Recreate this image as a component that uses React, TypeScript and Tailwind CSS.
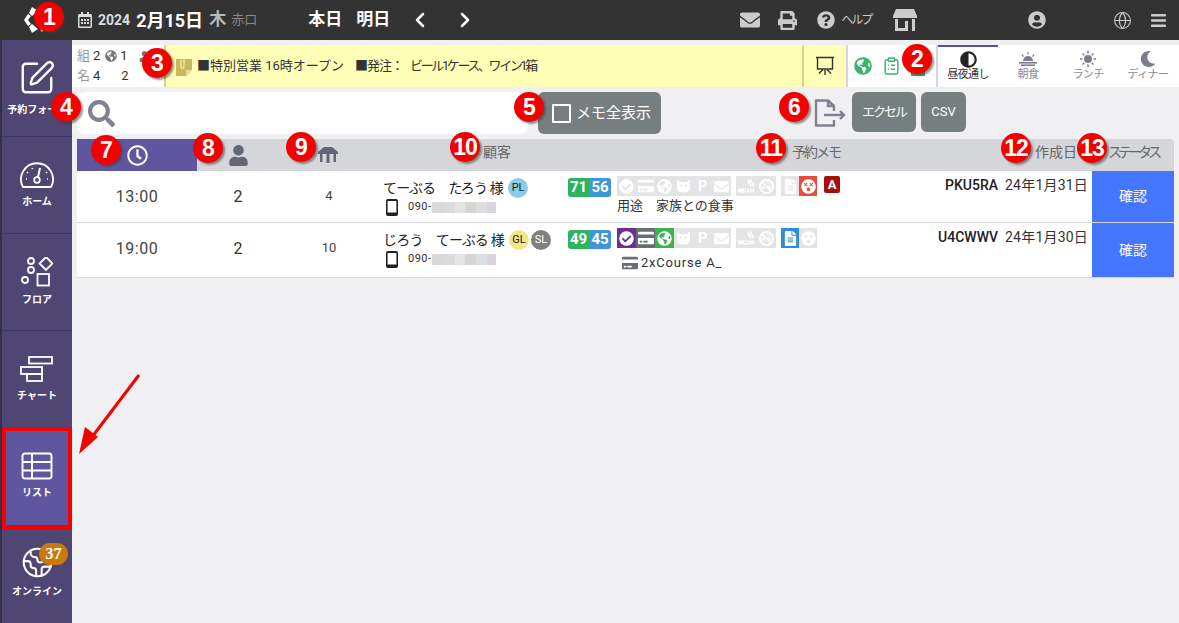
import type { ReactNode } from 'react';
import { ChevronLeft, ChevronRight, ClipboardList, Earth, Globe, SquarePen } from 'lucide-react';
import {
  FaAdjust, FaBars, FaCheckCircle, FaDizzy, FaEnvelope, FaFileAlt, FaGlobeAmericas,
  FaMoon, FaPrint, FaQuestionCircle, FaRegCalendarAlt, FaRegClock, FaSearch, FaSmoking,
  FaSmokingBan, FaUser, FaUserCircle, FaCreditCard,
} from 'react-icons/fa';

const MARKERS = [
  { n: 1, cls: 'left-[34px] top-[2px]' },
  { n: 2, cls: 'left-[902px] top-[44px]' },
  { n: 3, cls: 'left-[142px] top-[48px]' },
  { n: 4, cls: 'left-[51px] top-[92px]' },
  { n: 5, cls: 'left-[514px] top-[92px]' },
  { n: 6, cls: 'left-[779px] top-[92px]' },
  { n: 7, cls: 'left-[91px] top-[135px]' },
  { n: 8, cls: 'left-[193px] top-[133px]' },
  { n: 9, cls: 'left-[286px] top-[132px]' },
  { n: 10, cls: 'left-[450px] top-[132px]' },
  { n: 11, cls: 'left-[756px] top-[133px]' },
  { n: 12, cls: 'left-[1001px] top-[133px]' },
  { n: 13, cls: 'left-[1077px] top-[133px]' },
];

function Marker({ n, cls }: { n: number; cls: string }) {
  return (
    <div className={`absolute ${cls} w-[30px] h-[30px] rounded-full bg-[#f50000] text-white flex items-center justify-center font-['Liberation_Sans',sans-serif] font-bold text-[23px] tracking-[-1px] shadow-[2px_2px_2px_rgba(60,60,60,0.55)] z-20`}>
      {n}
    </div>
  );
}

function Logo() {
  return (
    <svg viewBox="0 0 24 28" className="w-[24px] h-[28px]" fill="#fff">
      <path d="M9 1 L15 5 L9 10 L6 7 Z" />
      <path d="M5 8 L8 10 L5 14 L8 18 L5 20 L1 14 Z" />
      <path d="M6 21 L9 18 L15 23 L9 27 Z" />
      <path d="M17 23 L21 20 L23 22 L19 26 Z" />
    </svg>
  );
}

function GaugeIcon() {
  return (
    <svg viewBox="0 0 34 28" className="w-[34px] h-[28px]" fill="none" stroke="#fff" strokeWidth="1.8">
      <path d="M3 26 A16 16 0 1 1 31 26 Z" strokeLinejoin="round" />
      <circle cx="17" cy="19" r="2.8" />
      <path d="M18 16 L20 7" strokeWidth="2" />
      <path d="M7 11 L8 12 M6 18 L7 18 M27 11 L26 12 M28 18 L27 18 M12 7 L12.5 8" strokeWidth="1.6" />
    </svg>
  );
}

function FloorIcon() {
  return (
    <svg viewBox="0 0 32 30" className="w-[32px] h-[30px]" fill="none" stroke="#fff" strokeWidth="1.8">
      <circle cx="10" cy="4" r="3" />
      <circle cx="10" cy="13" r="3" />
      <circle cx="4" cy="23" r="3" />
      <path d="M25 0 L31.5 6.5 L25 13 L18.5 6.5 Z" />
      <rect x="16.5" y="17" width="11.5" height="11.5" />
    </svg>
  );
}

function ChartIcon() {
  return (
    <svg viewBox="0 0 34 27" className="w-[34px] h-[27px]" fill="none" stroke="#fff" strokeWidth="1.8">
      <rect x="9" y="1" width="23" height="6.5" />
      <rect x="1" y="11" width="21" height="7" />
      <rect x="7" y="18" width="15" height="7" />
    </svg>
  );
}

function ListIcon() {
  return (
    <svg viewBox="0 0 32 28" className="w-[32px] h-[28px]" fill="none" stroke="#fff" strokeWidth="1.9">
      <rect x="1.5" y="1.5" width="29" height="25" rx="2.5" />
      <path d="M1.5 10 H30.5 M1.5 18.5 H30.5 M11 1.5 V26.5" />
    </svg>
  );
}

function CatIcon() {
  return (
    <svg viewBox="0 0 16 14" className="w-[15px] h-[14px]" fill="#fff">
      <path fillRule="evenodd" d="M1 0 L5 3 H11 L15 0 V9 C15 12 12 14 8 14 C4 14 1 12 1 9 Z M4 6.5 A1.2 1.2 0 0 0 6.4 6.5 A1.2 1.2 0 0 0 4 6.5 Z M9.6 6.5 A1.2 1.2 0 0 0 12 6.5 A1.2 1.2 0 0 0 9.6 6.5 Z" />
    </svg>
  );
}

function NavItem({ icon, label, active, badge }: { icon: ReactNode; label: string; active?: boolean; badge?: string }) {
  return (
    <div className={`relative flex flex-col items-center justify-center gap-[6px] text-white ${active ? 'h-[102px] mt-[-1px] pb-[5px] bg-[#6056a0] border-[4px] border-[#f50000]' : badge ? 'h-[96px] pb-[10px]' : 'h-[97px] border-b border-[#3f3862]'}`}>
      {icon}
      <span className="text-[10px] font-bold whitespace-nowrap leading-[14px]">{label}</span>
      {badge && (
        <span className="absolute left-[37px] top-[14px] w-[29px] h-[22px] rounded-full bg-[#c97a08] flex items-center justify-center text-[16px] font-bold font-['Liberation_Serif',serif]">
          {badge}
        </span>
      )}
    </div>
  );
}

function Tile({ on, w, children }: { on?: string; w: string; children: ReactNode }) {
  return (
    <span className={`${w} h-[20px] flex items-center justify-center text-white text-[15px] font-bold ${on ?? 'bg-[#e4e4e6]'}`}>
      {children}
    </span>
  );
}

function Badge({ text, cls }: { text: string; cls: string }) {
  return (
    <span className={`w-[20px] h-[20px] rounded-full flex items-center justify-center text-[11px] ${cls}`}>{text}</span>
  );
}

function Pixelated() {
  return (
    <span className="flex w-[64px] h-[11px]">
      <span className="w-[12px] bg-[#dcd8d8]" />
      <span className="w-[11px] bg-[#d8dcde]" />
      <span className="w-[10px] bg-[#e4e4e4]" />
      <span className="w-[11px] bg-[#d8d6d2]" />
      <span className="w-[11px] bg-[#dcdfe2]" />
      <span className="w-[9px] bg-[#d8d6da]" />
    </span>
  );
}

function PhoneIcon() {
  return (
    <svg viewBox="0 0 12 17" className="w-[12px] h-[17px] ml-[3px] mr-[10px]" fill="#222">
      <path fillRule="evenodd" d="M2 0 H10 A2 2 0 0 1 12 2 V15 A2 2 0 0 1 10 17 H2 A2 2 0 0 1 0 15 V2 A2 2 0 0 1 2 0 Z M1.6 2 V13.5 H10.4 V2 Z" />
    </svg>
  );
}

type RowData = {
  time: string;
  table: string;
  name: string;
  badges: ReactNode;
  scores: [string, string];
  activeFirst: boolean;
  note: ReactNode;
  code: string;
  date: string;
  height: string;
};

const ROWS: RowData[] = [
  {
    time: '13:00',
    table: '4',
    name: 'てーぶる　たろう 様',
    badges: <Badge text="PL" cls="bg-[#8ecbe6] text-[#222]" />,
    scores: ['71', '56'],
    activeFirst: false,
    note: <span className="text-[13px] text-[#333]">用途　家族との食事</span>,
    code: 'PKU5RA',
    date: '24年1月31日',
    height: 'h-[52px]',
  },
  {
    time: '19:00',
    table: '10',
    name: 'じろう　てーぶる 様',
    badges: (
      <>
        <Badge text="GL" cls="bg-[#f5e58a] text-[#222]" />
        <Badge text="SL" cls="bg-[#808080] text-white" />
      </>
    ),
    scores: ['49', '45'],
    activeFirst: true,
    note: (
      <span className="ml-[5px] flex items-center gap-[3px] text-[13px] tracking-[0.8px] text-[#333]">
        <FaCreditCard className="text-[16px] text-[#666e70]" />
        2xCourse A_
      </span>
    ),
    code: 'U4CWWV',
    date: '24年1月30日',
    height: 'h-[55px]',
  },
];

function Row({ r }: { r: RowData }) {
  return (
    <div className={`flex ${r.height} bg-white border-b border-[#d5d5da]`}>
      <div className="w-[120px] pt-[16px] text-center text-[16px] tracking-[0.5px] text-[#444] leading-[20px]">{r.time}</div>
      <div className="w-[82px] pt-[16px] text-center text-[16px] text-[#333] leading-[20px]">2</div>
      <div className="w-[100px] pt-[15px] text-center text-[13px] text-[#444] leading-[20px]">{r.table}</div>
      <div className="w-[189px] pl-[4px] pt-[7px]">
        <div className="flex items-center gap-[5px] h-[20px] text-[14px] tracking-[-0.8px] text-[#222] whitespace-nowrap">
          {r.name}
          <span className="flex gap-[2px] tracking-normal">{r.badges}</span>
        </div>
        <div className="flex items-center h-[18px] text-[11px] text-[#333] tracking-[0.5px]">
          <PhoneIcon />
          090-
          <Pixelated />
        </div>
      </div>
      <div className="w-[369px] pt-[5px] flex gap-[6px]">
        <div className="flex h-[19px] mt-[2px] rounded-[3px] overflow-hidden text-white font-bold text-[15px] leading-[19px] text-center">
          <span className="w-[21px] bg-[#2fb35f]">{r.scores[0]}</span>
          <span className="w-[22px] bg-[#3f97d8]">{r.scores[1]}</span>
        </div>
        <div className="flex-1">
          <div className="flex items-start">
            <div className="flex">
              <Tile w="w-[19px]" on={r.activeFirst ? 'bg-[#6e2f91]' : undefined}><FaCheckCircle /></Tile>
              <Tile w="w-[19px]" on={r.activeFirst ? 'bg-[#666e70]' : undefined}><FaCreditCard className="text-[16px]" /></Tile>
              <Tile w="w-[19px]" on={r.activeFirst ? 'bg-[#38b44d]' : undefined}><FaGlobeAmericas /></Tile>
              <Tile w="w-[19px]"><CatIcon /></Tile>
              <Tile w="w-[19px]">P</Tile>
              <Tile w="w-[19px]"><FaEnvelope /></Tile>
            </div>
            <div className="flex ml-[5px]">
              <Tile w="w-[20px]"><FaSmoking className="text-[16px]" /></Tile>
              <Tile w="w-[20px]"><FaSmokingBan className="text-[15px]" /></Tile>
            </div>
            <div className="flex ml-[5px]">
              <Tile w="w-[18px]" on={r.activeFirst ? 'bg-[#2e8fd8]' : undefined}><FaFileAlt /></Tile>
              <Tile w="w-[18px]" on={r.activeFirst ? undefined : 'bg-[#ea4c3c]'}><FaDizzy /></Tile>
            </div>
            {!r.activeFirst && (
              <span className="ml-[7px] w-[16px] h-[17px] rounded-[2px] bg-[#a80c0c] text-white text-[13px] font-bold flex items-center justify-center">A</span>
            )}
          </div>
          <div className={`flex ${r.activeFirst ? 'mt-[5px]' : 'mt-[0px]'} h-[20px] items-center`}>{r.note}</div>
        </div>
      </div>
      <div className="flex-1 flex justify-end gap-[7px] pr-[4px] pt-[6px] text-[14px] text-[#333] whitespace-nowrap leading-[16px]">
        <span className="font-medium text-[#222]">{r.code}</span>
        <span className="tracking-[0.2px]">{r.date}</span>
      </div>
      <div className="w-[82px] bg-[#4476ff] text-white text-[14px] flex items-center justify-center">確認</div>
    </div>
  );
}

function MealTab({ icon, label, active }: { icon: ReactNode; label: string; active?: boolean }) {
  return (
    <div className={`w-[60px] flex flex-col items-center pt-[3px] text-[11px] leading-[14px] ${active ? 'border-t-2 border-[#5b4fa0] text-[#333]' : 'border-t-2 border-white text-[#8a8a99]'}`}>
      <span className={`h-[18px] flex items-center text-[16px] ${active ? 'text-[#222]' : 'text-[#7c7c8c]'}`}>{icon}</span>
      <span className="whitespace-nowrap tracking-[-0.6px]">{label}</span>
    </div>
  );
}

function SunriseIcon() {
  return (
    <svg viewBox="0 0 18 14" className="w-[18px] h-[14px]" fill="#7c7c8c">
      <path d="M4 9 A5 5 0 0 1 14 9 Z" />
      <rect x="0" y="10" width="18" height="1.6" />
      <rect x="2" y="12.4" width="14" height="1.6" />
      <path d="M8.4 0 H9.6 V2.6 H8.4 Z M2.5 3 L3.5 2.2 L5 4.2 L4 5 Z M15.5 3 L14.5 2.2 L13 4.2 L14 5 Z" />
    </svg>
  );
}

function SunIcon() {
  return (
    <svg viewBox="0 0 16 16" className="w-[16px] h-[16px]" fill="#7c7c8c">
      <circle cx="8" cy="8" r="4" />
      <path d="M7.2 0 H8.8 V2.4 H7.2 Z M7.2 13.6 H8.8 V16 H7.2 Z M0 7.2 H2.4 V8.8 H0 Z M13.6 7.2 H16 V8.8 H13.6 Z M2 3.1 L3.1 2 L4.8 3.7 L3.7 4.8 Z M11.2 12.3 L12.3 11.2 L14 12.9 L12.9 14 Z M12.9 2 L14 3.1 L12.3 4.8 L11.2 3.7 Z M3.7 11.2 L4.8 12.3 L3.1 14 L2 12.9 Z" />
    </svg>
  );
}

export default function App() {
  return (
    <div className="relative w-[1179px] h-[623px] overflow-hidden bg-[#f0f0f3] font-['Roboto','Noto_Sans_CJK_JP',sans-serif]">
      <header className="h-[40px] bg-[#333] flex items-center text-white">
        <div className="ml-[23px] w-[54px]"><Logo /></div>
        <FaRegCalendarAlt className="text-[16px] text-[#ddd]" />
        <span className="ml-[5px] text-[14px] font-bold text-[#ddd]">2024</span>
        <span className="ml-[6px] text-[18px] font-bold">2月15日</span>
        <span className="ml-[6px] text-[17px] font-bold text-[#bbb]">木</span>
        <span className="ml-[5px] text-[13px] text-[#888]">赤口</span>
        <span className="ml-[51px] text-[17px] font-bold">本日</span>
        <span className="ml-[14px] text-[17px] font-bold">明日</span>
        <ChevronLeft className="ml-[18px] w-[24px] h-[24px]" strokeWidth={2.5} />
        <ChevronRight className="ml-[21px] w-[24px] h-[24px]" strokeWidth={2.5} />
        <FaEnvelope className="ml-[263px] text-[20px] text-[#ccc]" />
        <FaPrint className="ml-[18px] text-[19px] text-[#ccc]" />
        <FaQuestionCircle className="ml-[20px] text-[18px] text-[#ccc]" />
        <span className="ml-[6px] text-[12px] tracking-[-2px] text-[#ccc]">ヘルプ</span>
        <svg viewBox="0 0 24 22" className="ml-[22px] w-[24px] h-[22px]" fill="#ccc">
          <path d="M3 0 H21 L24 7 V9 H0 V7 Z" />
          <path d="M2 10 H5 V19 H12 V12 H15 V22 H2 Z" />
          <rect x="19" y="10" width="3" height="12" />
        </svg>
        <FaUserCircle className="ml-[111px] text-[18px] text-[#ccc]" />
        <Globe className="ml-[67px] w-[19px] h-[19px] text-[#ccc]" strokeWidth={1.3} />
        <FaBars className="ml-[18px] text-[17px] text-[#ccc]" />
      </header>

      <div className="flex h-[583px]">
        <nav className="w-[72px] bg-[#4f4674] border-l-2 border-[#343048]">
          <NavItem icon={<SquarePen className="w-[38px] h-[38px]" strokeWidth={1.5} />} label="予約フォーム" />
          <NavItem icon={<GaugeIcon />} label="ホーム" />
          <NavItem icon={<FloorIcon />} label="フロア" />
          <NavItem icon={<ChartIcon />} label="チャート" />
          <NavItem icon={<ListIcon />} label="リスト" active />
          <NavItem icon={<Earth className="w-[33px] h-[33px]" strokeWidth={1.5} />} label="オンライン" badge="37" />
        </nav>

        <main className="flex-1 min-w-0 pt-[5px]">
          <div className="h-[42px] flex bg-white">
            <div className="w-[92px] pl-[5px] text-[13px] leading-[20px] text-[#333] pt-[1px] whitespace-nowrap">
              <div className="flex items-center gap-[3px]"><span className="text-[#999]">組</span>2<FaGlobeAmericas className="ml-[2px] text-[12px] text-[#777]" />1<FaUser className="ml-[8px] text-[11px] text-[#777]" /></div>
              <div className="flex items-center gap-[3px]"><span className="text-[#999]">名</span>4<span className="ml-[18px]">2</span></div>
            </div>
            <div className="w-[682px] bg-[#ffffb8] border-l-2 border-[#d8d28c] flex items-center">
              <svg viewBox="0 0 16 19" className="ml-[10px] w-[16px] h-[19px]" fill="#c8b860">
                <path d="M0 2 H16 V13 L10 19 H0 Z" />
                <path d="M10 19 V13 H16 Z" fill="#e6dc98" />
                <path d="M4 1 A2 2 0 0 1 8 1 V10 A1.4 1.4 0 0 1 5 10 V3" fill="none" stroke="#ffffb8" strokeWidth="1" />
              </svg>
              <span className="ml-[5px] text-[13px] text-[#333] whitespace-nowrap">■特別営業 16時オープン</span>
              <span className="ml-[11px] text-[13px] tracking-[-1px] text-[#333] whitespace-nowrap">■発注：</span>
              <span className="ml-[7px] text-[13px] tracking-[-2.4px] text-[#333] whitespace-nowrap">ビール1ケース、ワイン1箱</span>
              <div className="ml-auto w-[44px] h-full border-l-2 border-[#d8d28c] flex items-center justify-center">
                <svg viewBox="0 0 20 20" className="w-[20px] h-[20px]" fill="none" stroke="#333" strokeWidth="1.4">
                  <path d="M1 1.5 H19 M2.5 1.5 V13 H17.5 V1.5" />
                  <path d="M4 17.5 L8 13.5 M10 13.5 V19 M16 17.5 L12 13.5" />
                </svg>
              </div>
            </div>
            <div className="w-[92px] border-l-2 border-r-2 border-[#d5d5da] flex items-center pl-[6px] gap-[10px]">
              <FaGlobeAmericas className="text-[18px] text-[#38b46c]" />
              <ClipboardList className="w-[19px] h-[20px] text-[#38b46c]" strokeWidth={1.8} />
              <span className="w-[14px] h-[12px] mt-[8px] bg-[#38b46c]" />
            </div>
            <div className="flex-1 flex">
              <MealTab icon={<FaAdjust className="text-[17px]" />} label="昼夜通し" active />
              <MealTab icon={<SunriseIcon />} label="朝食" />
              <MealTab icon={<SunIcon />} label="ランチ" />
              <MealTab icon={<FaMoon />} label="ディナー" />
            </div>
          </div>

          <div className="flex items-start h-[42px] mt-[5px] pl-[5px]">
            <div className="w-[451px] h-[42px] bg-white rounded-lg flex items-center pl-[11px]">
              <FaSearch className="text-[27px] text-[#7f8090]" />
            </div>
            <button className="ml-[10px] w-[123px] h-[42px] bg-[#777e80] rounded-md text-white text-[15px] flex items-center justify-center gap-[5px] pl-[4px]">
              <span className="w-[19px] h-[19px] border-2 border-white rounded-[1px]" />
              メモ全表示
            </button>
            <svg viewBox="0 0 32 28" className="ml-[153px] mt-[7px] w-[32px] h-[28px]" fill="none" stroke="#7f8090" strokeWidth="2.4">
              <path d="M20 12 V7 L14 1.5 H2 V26.5 H20 V21" strokeLinejoin="round" />
              <path d="M14 1.5 V7 H20" />
              <path d="M10 16 H30 M26 12 L30 16 L26 20" />
            </svg>
            <button className="ml-[6px] w-[64px] h-[40px] bg-[#777e80] rounded-md text-white text-[13px] tracking-[-2px]">エクセル</button>
            <button className="ml-[5px] w-[45px] h-[40px] bg-[#777e80] rounded-md text-white text-[13px]">CSV</button>
          </div>

          <div className="mt-[5px] ml-[5px] w-[1097px]">
            <div className="flex h-[32px] bg-[#d5d6da] rounded-tr text-[14px] text-[#666] leading-[20px]">
              <div className="w-[120px] bg-[#6056a0] flex items-center justify-center pt-[1px]">
                <FaRegClock className="text-[21px] text-white" />
              </div>
              <div className="w-[82px] flex items-center justify-center"><FaUser className="text-[21px] text-[#666672]" /></div>
              <div className="w-[100px] flex items-center justify-center pr-[3px]">
                <svg viewBox="0 0 20 16" className="w-[20px] h-[16px]" fill="#666672">
                  <path d="M6 0 H14 L20 5 V7 H0 V5 Z" />
                  <rect x="2" y="7" width="2.5" height="8" />
                  <rect x="8.5" y="7" width="3" height="9" />
                  <rect x="15.5" y="7" width="2.5" height="8" />
                </svg>
              </div>
              <div className="w-[189px] pl-[104px] pt-[3px]">顧客</div>
              <div className="w-[369px] pl-[224px] pt-[3px] whitespace-nowrap tracking-[-2px]">予約メモ</div>
              <div className="flex-1 text-right pr-[15px] pt-[3px]">作成日</div>
              <div className="w-[82px] pl-[16px] pt-[3px] whitespace-nowrap tracking-[-4px]">ステータス</div>
            </div>
            {ROWS.map(r => <Row key={r.code} r={r} />)}
          </div>
        </main>
      </div>

      {MARKERS.map(m => <Marker key={m.n} n={m.n} cls={m.cls} />)}

      <svg viewBox="0 0 70 90" className="absolute left-[75px] top-[370px] w-[70px] h-[90px] z-20">
        <path d="M64 5 L14 71" stroke="#f50000" strokeWidth="3" />
        <path d="M4 84 L10 57 L23 67 Z" fill="#f50000" />
      </svg>
    </div>
  );
}
